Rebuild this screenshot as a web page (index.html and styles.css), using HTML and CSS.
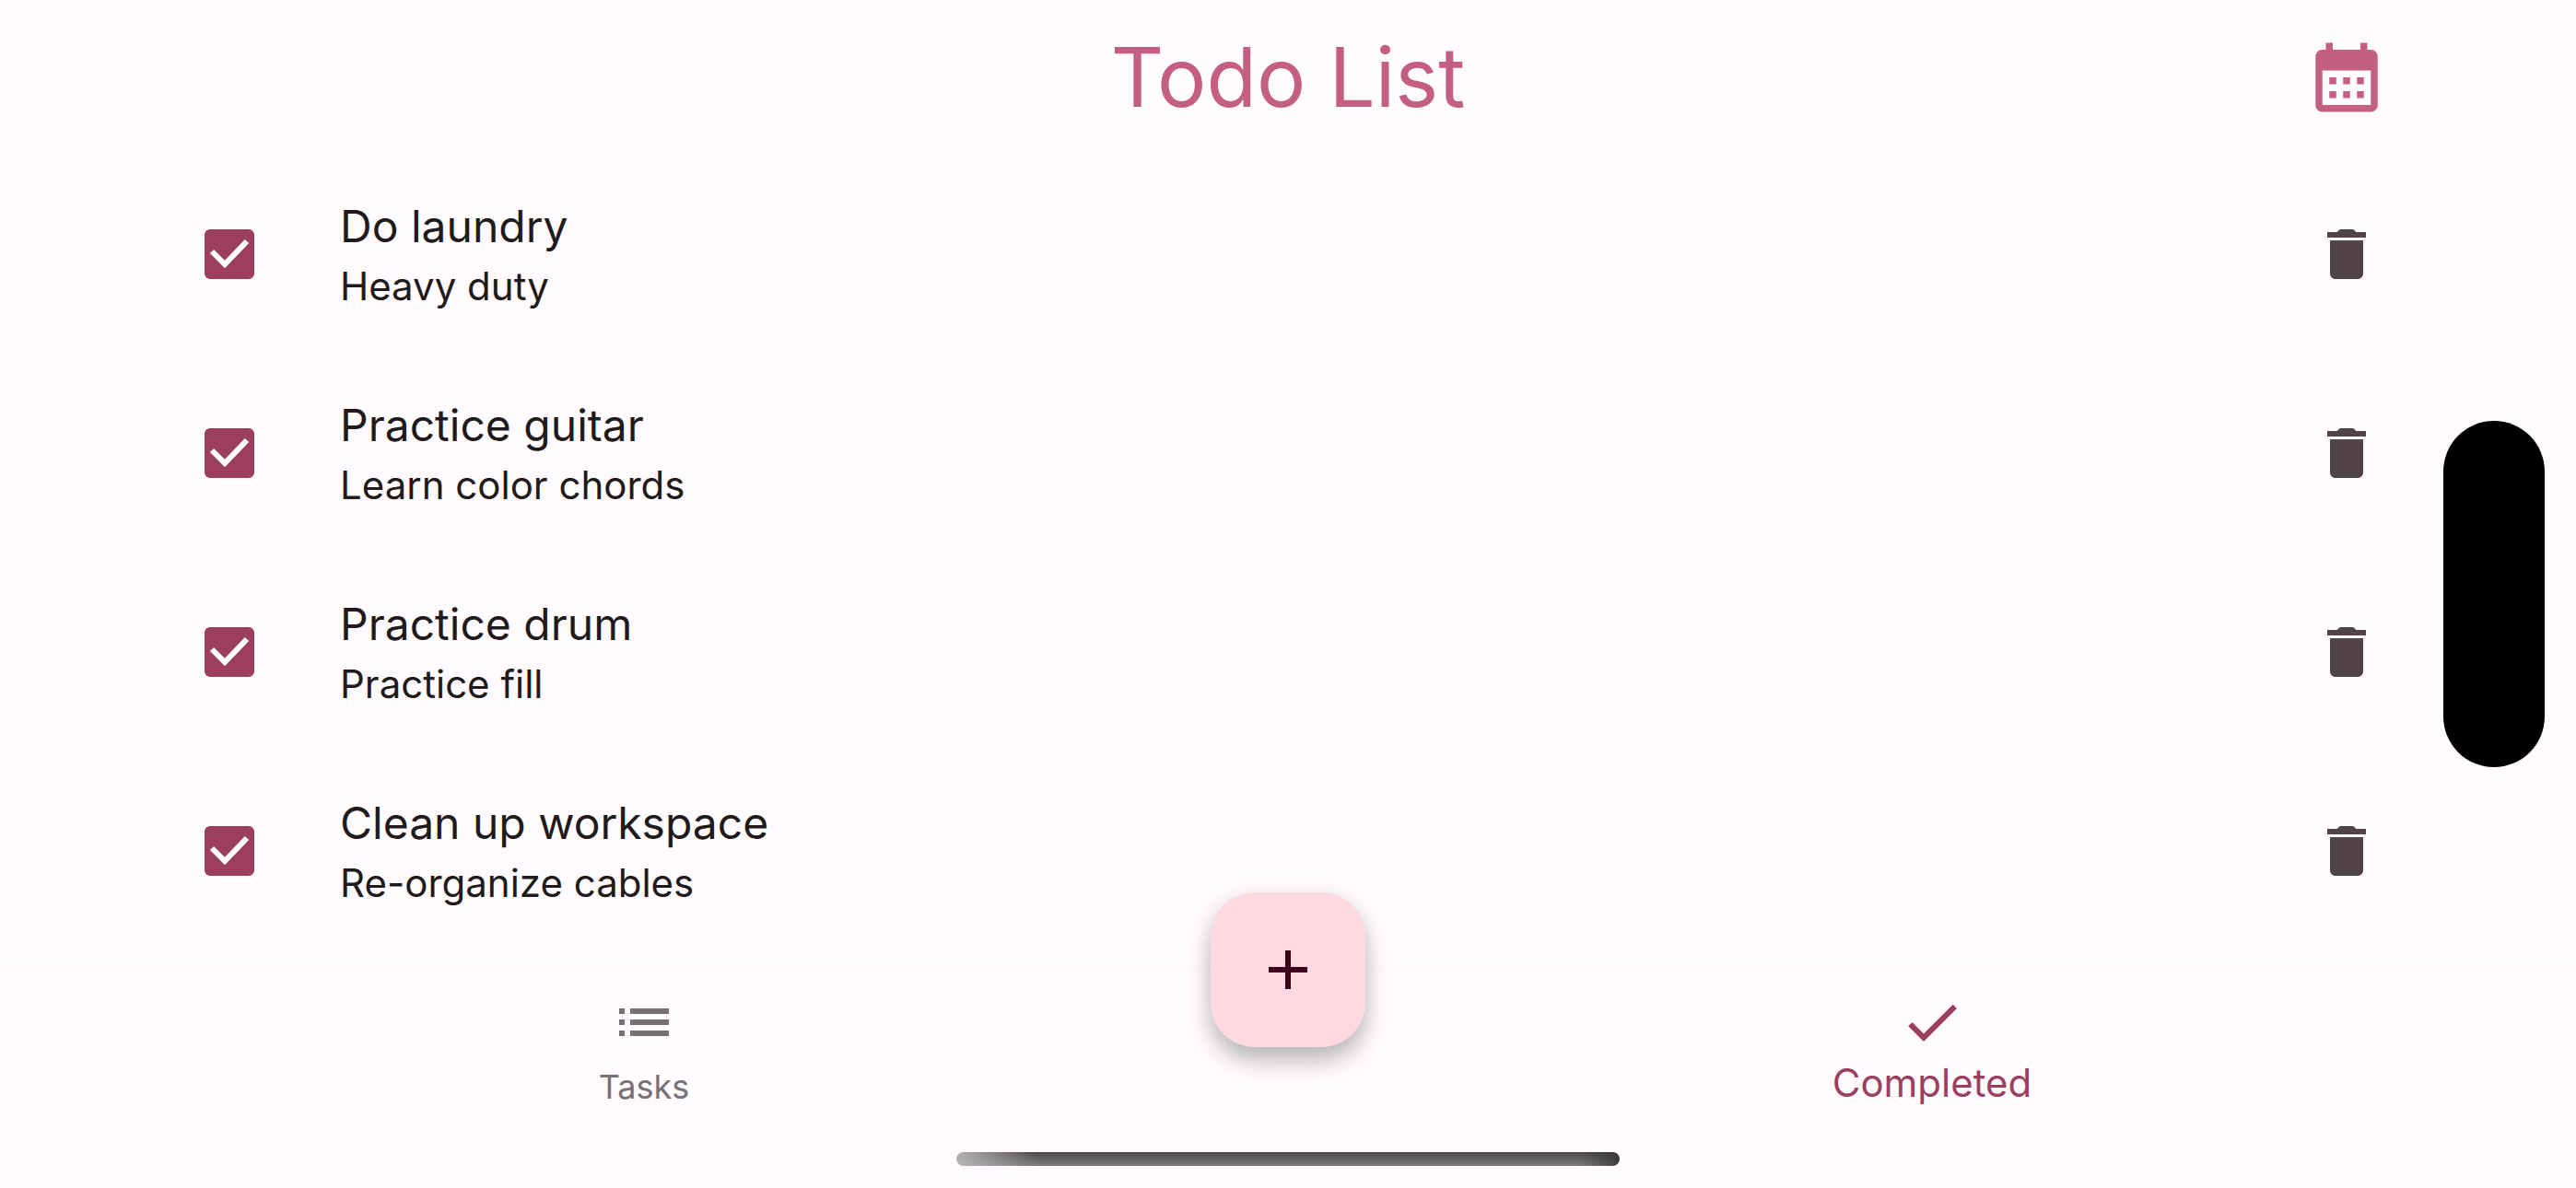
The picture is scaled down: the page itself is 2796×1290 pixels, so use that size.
FILE: index.html
```html
<!DOCTYPE html>
<html lang="en">
<head>
<meta charset="utf-8">
<meta name="viewport" content="width=device-width, initial-scale=1">
<title>Todo List</title>
<link rel="stylesheet" href="styles.css">
</head>
<body>
<svg class="sprite" aria-hidden="true">
  <symbol id="trash" viewBox="0 0 24 24"><path d="M6 19c0 1.1.9 2 2 2h8c1.1 0 2-.9 2-2V7H6v12zM19 4h-3.5l-.7-.7c-.2-.2-.5-.3-.7-.3H9.9c-.2 0-.5.1-.7.3L8.500 4H5v2h14V4z"/></symbol>
</svg>
<div class="app">
  <header class="app-bar">
    <h1 class="app-title">Todo List</h1>
    <button class="icon-button calendar-button" type="button" aria-label="Calendar">
      <svg class="icon-large" viewBox="0 0 24 24"><path d="M19 4h-1V2h-2v2H8V2H6v2H5c-1.110 0-1.990.9-1.990 2L3 20c0 1.100.89 2 2 2h14c1.100 0 2-.9 2-2V6c0-1.100-.9-2-2-2zm0 16H5V10h14v10zM9 14H7v-2h2v2zm4 0h-2v-2h2v2zm4 0h-2v-2h2v2zm-8 4H7v-2h2v2zm4 0h-2v-2h2v2zm4 0h-2v-2h2v2z"/></svg>
    </button>
  </header>

  <main class="content">
    <ul class="task-list">
      <li class="task">
        <span class="check"><input class="check-input" id="task-1" type="checkbox" checked><svg class="check-mark" viewBox="0 0 54 54"><path d="M8 24l14 14 24-25"/></svg></span>
        <label class="task-text" for="task-1"><span class="task-title">Do laundry</span><span class="task-note">Heavy duty</span></label>
        <button class="icon-button" type="button" aria-label="Delete Do laundry"><svg class="icon"><use href="#trash"/></svg></button>
      </li>
      <li class="task">
        <span class="check"><input class="check-input" id="task-2" type="checkbox" checked><svg class="check-mark" viewBox="0 0 54 54"><path d="M8 24l14 14 24-25"/></svg></span>
        <label class="task-text" for="task-2"><span class="task-title">Practice guitar</span><span class="task-note">Learn color chords</span></label>
        <button class="icon-button" type="button" aria-label="Delete Practice guitar"><svg class="icon"><use href="#trash"/></svg></button>
      </li>
      <li class="task">
        <span class="check"><input class="check-input" id="task-3" type="checkbox" checked><svg class="check-mark" viewBox="0 0 54 54"><path d="M8 24l14 14 24-25"/></svg></span>
        <label class="task-text" for="task-3"><span class="task-title">Practice drum</span><span class="task-note">Practice fill</span></label>
        <button class="icon-button" type="button" aria-label="Delete Practice drum"><svg class="icon"><use href="#trash"/></svg></button>
      </li>
      <li class="task">
        <span class="check"><input class="check-input" id="task-4" type="checkbox" checked><svg class="check-mark" viewBox="0 0 54 54"><path d="M8 24l14 14 24-25"/></svg></span>
        <label class="task-text" for="task-4"><span class="task-title">Clean up workspace</span><span class="task-note">Re-organize cables</span></label>
        <button class="icon-button" type="button" aria-label="Delete Clean up workspace"><svg class="icon"><use href="#trash"/></svg></button>
      </li>
    </ul>
  </main>

  <nav class="bottom-bar">
    <button class="tab" type="button">
      <svg class="icon" viewBox="0 0 24 24"><path d="M3 7h2v2H3zM3 11h2v2H3zM3 15h2v2H3zM7 7h14v2H7zM7 11h14v2H7zM7 15h14v2H7z"/></svg>
      <span class="tab-label">Tasks</span>
    </button>
    <button class="tab tab-active" type="button" aria-current="page">
      <svg class="icon" viewBox="0 0 24 24"><path d="M9 16.170L4.830 12l-1.420 1.410L9 19 21 7l-1.410-1.410z"/></svg>
      <span class="tab-label">Completed</span>
    </button>
    <button class="fab" type="button" aria-label="Add task">
      <svg class="icon" viewBox="0 0 24 24"><path d="M19 13h-6v6h-2v-6H5v-2h6V5h2v6h6v2z"/></svg>
    </button>
    <div class="home-indicator"></div>
  </nav>
</div>
<div class="camera-cutout"></div>
</body>
</html>
```
FILE: styles.css
```css
:root {
  --surface: #fffbff;
  --primary: #9c3e60;
  --title: #c45f81;
  --text: #201a1b;
  --muted: #757175;
  --icon: #514346;
  --touch: 144px;
  --safe: 177px;
}

* {
  box-sizing: border-box;
}

body {
  margin: 0;
  background: var(--surface);
  color: var(--text);
  font-family: Inter, "Liberation Sans", sans-serif;
  font-optical-sizing: none;
}

button {
  margin: 0;
  padding: 0;
  border: 0;
  background: none;
  color: inherit;
  font: inherit;
  cursor: pointer;
}

svg {
  display: block;
  fill: currentColor;
}

.sprite {
  position: absolute;
  width: 0;
  height: 0;
}

.app {
  display: flex;
  flex-direction: column;
  min-height: 100vh;
}

.app-bar {
  display: grid;
  grid-template-columns: var(--touch) 1fr var(--touch);
  align-items: center;
  height: 168px;
  padding: 0 var(--safe);
  color: var(--title);
}

.app-title {
  grid-column: 2;
  margin: 0;
  font-size: 89px;
  font-weight: 400;
  line-height: 106px;
  text-align: center;
}

.icon-button {
  display: grid;
  place-items: center;
  width: var(--touch);
  height: var(--touch);
  color: var(--icon);
}

.calendar-button {
  color: inherit;
}

.icon {
  width: 72px;
  height: 72px;
}

.icon-large {
  width: 90px;
  height: 90px;
}

.content {
  flex: 1;
}

.task-list {
  margin: 0;
  padding: 0 var(--safe);
  list-style: none;
}

.task {
  display: flex;
  align-items: center;
  height: 216px;
}

.check {
  display: grid;
  place-items: center;
  width: var(--touch);
  height: var(--touch);
}

.check-input,
.check-mark {
  grid-area: 1 / 1;
  width: 54px;
  height: 54px;
}

.check-input {
  margin: 0;
  appearance: none;
  border: 6px solid var(--icon);
  border-radius: 6px;
}

.check-input:checked {
  border-color: var(--primary);
  background: var(--primary);
}

.check-mark {
  fill: none;
  stroke: #fff;
  stroke-width: 6;
  pointer-events: none;
  visibility: hidden;
}

.check-input:checked + .check-mark {
  visibility: visible;
}

.task-text {
  display: flex;
  flex: 1;
  flex-direction: column;
  padding: 0 48px;
}

.task-title {
  font-size: 48px;
  line-height: 70px;
}

.task-note {
  font-size: 42px;
  line-height: 60px;
}

.bottom-bar {
  position: relative;
  display: grid;
  grid-template-columns: 1fr 1fr;
  height: 237px;
  background: var(--surface);
  box-shadow: 0 -3px 6px rgba(0, 0, 0, 0.02);
}

.tab {
  display: flex;
  flex-direction: column;
  align-items: center;
  gap: 8px;
  padding-top: 21px;
  color: var(--muted);
}

.tab-label {
  font-size: 36px;
  line-height: 52px;
}

.tab-active {
  color: var(--primary);
}

.tab-active .tab-label {
  font-size: 42px;
  line-height: 44px;
}

.fab {
  position: absolute;
  top: -84px;
  left: calc(50% - 84px);
  display: grid;
  place-items: center;
  width: 168px;
  height: 168px;
  border-radius: 48px;
  background: #ffd9e1;
  box-shadow: 0 15px 26px rgba(0, 0, 0, 0.26), 0 0 24px rgba(0, 0, 0, 0.05);
  color: #3f001c;
}

.home-indicator {
  position: absolute;
  bottom: 24px;
  left: calc(50% - 360px);
  width: 720px;
  height: 15px;
  border-radius: 8px;
  background:
    linear-gradient(90deg, rgba(190, 187, 190, 0.9), rgba(190, 187, 190, 0) 12%, rgba(50, 50, 50, 0) 94%, rgba(50, 50, 50, 0.8)),
    linear-gradient(#4c4a4c, #7d7b7d);
}

.camera-cutout {
  position: fixed;
  top: 457px;
  right: 34px;
  width: 110px;
  height: 376px;
  border-radius: 55px;
  background: #000;
}
```
